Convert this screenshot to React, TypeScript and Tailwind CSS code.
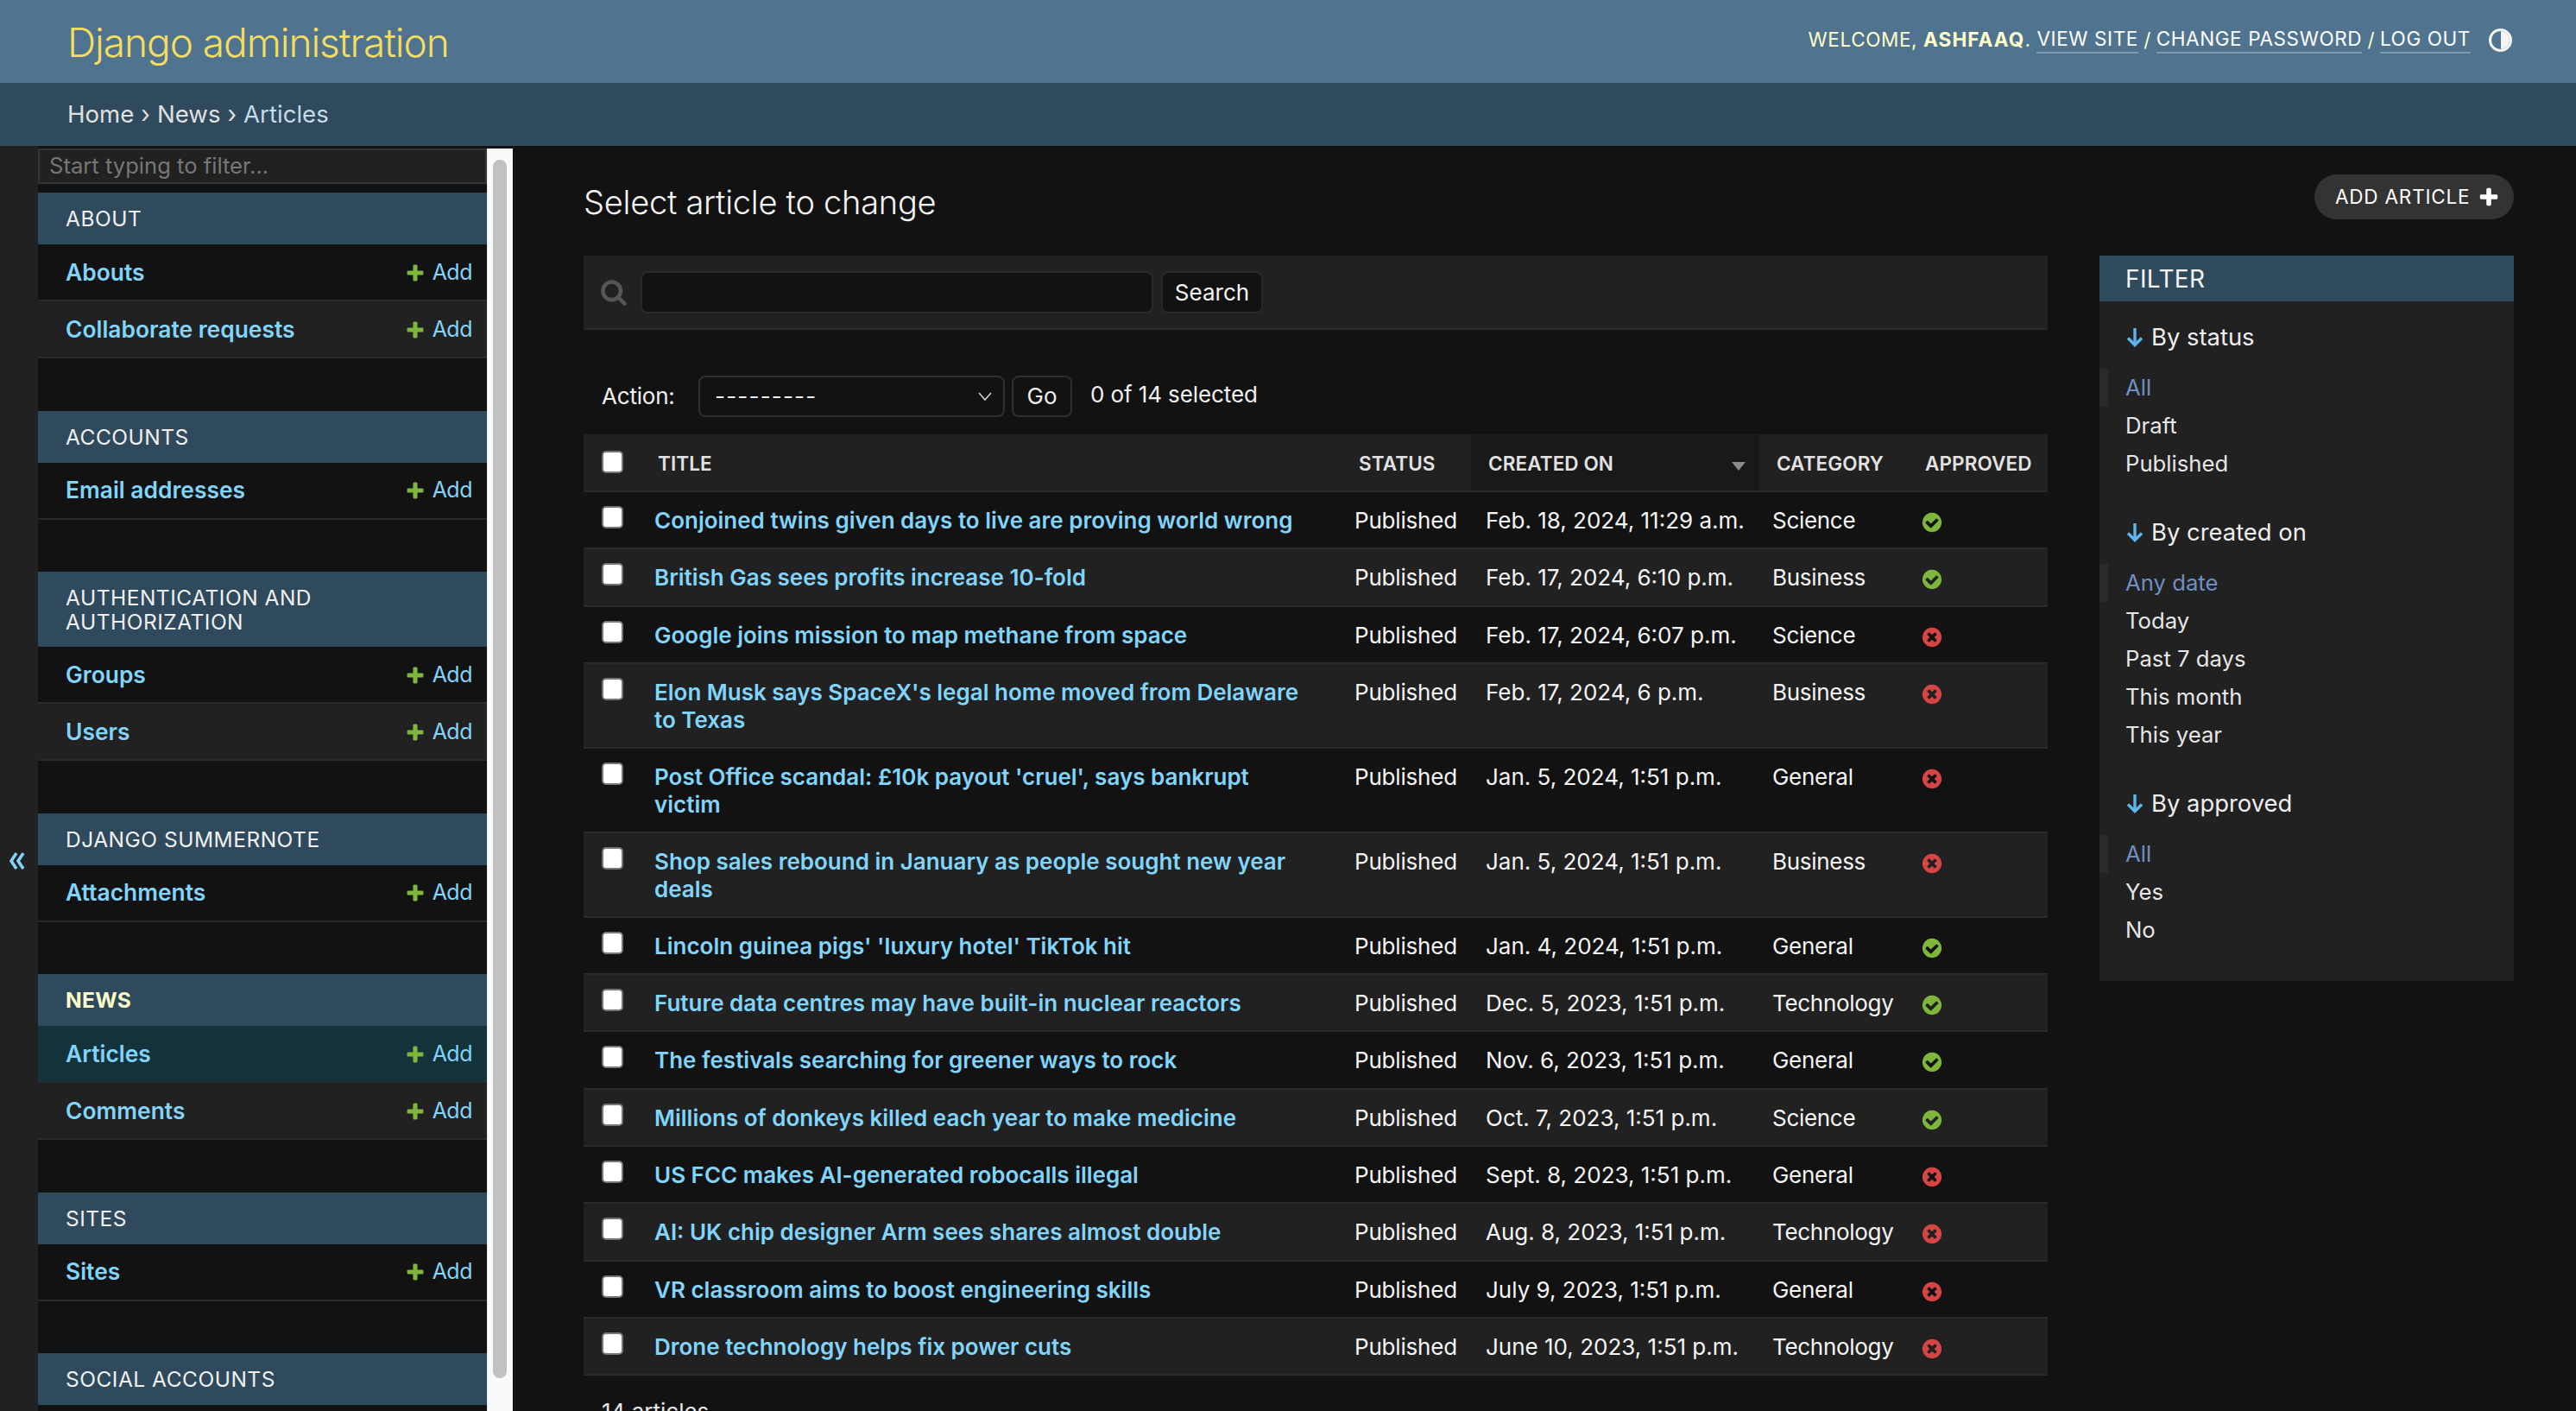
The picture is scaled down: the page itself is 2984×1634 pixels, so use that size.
import React from "react";

const ADD = "M1600 796v192q0 40-28 68t-68 28h-416v416q0 40-28 68t-68 28h-192q-40 0-68-28t-28-68v-416h-416q-40 0-68-28t-28-68v-192q0-40 28-68t68-28h416v-416q0-40 28-68t68-28h192q40 0 68 28t28 68v416h416q40 0 68 28t28 68z";
const YES = "M1412 734q0-28-18-46l-91-90q-19-19-45-19t-45 19l-408 407-226-226q-19-19-45-19t-45 19l-91 90q-18 18-18 46 0 27 18 45l362 362q19 19 45 19 27 0 46-19l543-543q18-18 18-45zm252 162q0 209-103 385.500t-279.500 279.500-385.500 103-385.500-103-279.500-279.500-103-385.500 103-385.500 279.500-279.500 385.500-103 385.500 103 279.500 279.500 103 385.500z";
const NO = "M1277 1122q0-26-19-45l-181-181 181-181q19-19 19-45 0-27-19-46l-90-90q-19-19-46-19-26 0-45 19l-181 181-181-181q-19-19-45-19-27 0-46 19l-90 90q-19 19-19 46 0 26 19 45l181 181-181 181q-19 19-19 45 0 27 19 46l90 90q19 19 46 19 26 0 45-19l181-181 181 181q19 19 45 19 27 0 46-19l90-90q19-19 19-46zm387-226q0 209-103 385.500t-279.500 279.500-385.500 103-385.500-103-279.500-279.500-103-385.500 103-385.500 279.500-279.500 385.500-103 385.500 103 279.500 279.500 103 385.500z";
const SEARCH = "M1216 832q0-185-131.500-316.500t-316.500-131.500-316.500 131.500-131.500 316.500 131.500 316.500 316.500 131.500 316.500-131.500 131.500-316.500zm512 832q0 52-38 90t-90 38q-54 0-90-38l-343-342q-179 124-399 124-143 0-273.500-55.500t-225-150-150-225-55.500-273.500 55.500-273.500 150-225 225-150 273.500-55.500 273.500 55.500 225 150 150 225 55.500 273.500q0 220-124 399l343 343q37 37 37 90z";

function Icon({ d, fill, size }: { d: string; fill: string; size: number }) {
  return (
    <svg width={size} height={size} viewBox="0 0 1792 1792" className="block shrink-0">
      <path fill={fill} d={d} />
    </svg>
  );
}

function Check({ className = "" }: { className?: string }) {
  return (
    <input
      type="checkbox"
      className={"block appearance-none w-[25px] h-[26px] bg-white border-2 border-[#767676] rounded-[5px] " + className}
    />
  );
}

const apps: { name: string[]; bold?: boolean; models: { n: string; current?: boolean }[] }[] = [
  { name: ["About"], models: [{ n: "Abouts" }, { n: "Collaborate requests" }] },
  { name: ["Accounts"], models: [{ n: "Email addresses" }] },
  { name: ["Authentication and", "Authorization"], models: [{ n: "Groups" }, { n: "Users" }] },
  { name: ["Django Summernote"], models: [{ n: "Attachments" }] },
  { name: ["News"], bold: true, models: [{ n: "Articles", current: true }, { n: "Comments" }] },
  { name: ["Sites"], models: [{ n: "Sites" }] },
];

function Sidebar() {
  return (
    <div className="flex h-full shrink-0">
      <div className="w-[44px] bg-[#212121] flex justify-center pt-[818px] pr-[4px]">
        <svg width="20" height="20" viewBox="0 0 20 20" className="block">
          <path d="M9 1 3 10l6 9M17 1l-6 9 6 9" fill="none" stroke="#81d4fa" strokeWidth="3.6" />
        </svg>
      </div>
      <div className="w-[520px] pt-[3px] overflow-hidden">
        <div className="h-[41px] bg-[#212121] border-2 border-[#353535] pl-[11px] flex items-center text-[25.6px] text-[#777]">
          Start typing to filter...
        </div>
        <div className="h-[10px]" />
        {apps.map((a, i) => (
          <div key={i} className="mb-[60.5px]">
            <div
              className={
                "bg-[#2f4a5c] px-[32px] flex flex-col justify-center text-[24.5px] leading-[28px] uppercase " +
                (a.name.length > 1 ? "h-[87px] " : "h-[60px] ") +
                (a.bold ? "font-bold text-[#ffffcc] tracking-[0.3px]" : "font-normal text-[#f0f0f0] tracking-[0.5px]")
              }
            >
              {a.name.map((l) => (
                <div key={l}>{l}</div>
              ))}
            </div>
            {a.models.map((m, j) => (
              <div
                key={m.n}
                className={
                  "h-[66px] px-[32px] pr-[17px] pt-[1px] flex items-center justify-between border-b-2 border-[#2a2a2a] " +
                  (m.current ? "bg-[#14323a]" : j % 2 === 0 ? "bg-[#121212]" : "bg-[#212121]")
                }
              >
                <span className="font-semibold text-[26.4px] text-[#81d4fa]">{m.n}</span>
                <span className="flex items-center gap-[8px] text-[25px] tracking-[-0.5px] text-[#81d4fa]">
                  <Icon d={ADD} fill="#7db63a" size={24} />
                  Add
                </span>
              </div>
            ))}
          </div>
        ))}
        <div className="bg-[#2f4a5c] h-[60px] px-[32px] flex items-center text-[24.5px] tracking-[0.5px] uppercase text-[#f0f0f0]">
          Social accounts
        </div>
      </div>
      <div className="w-[30px] bg-[#fafafa] border-x border-[#ececec] mt-[3px] pt-[13px] pb-[38px] flex justify-center">
        <div className="w-[16px] h-full rounded-full bg-[#c1c1c1]" />
      </div>
    </div>
  );
}

const rows: { t: string; d: string; c: string; ok: boolean }[] = [
  { t: "Conjoined twins given days to live are proving world wrong", d: "Feb. 18, 2024, 11:29 a.m.", c: "Science", ok: true },
  { t: "British Gas sees profits increase 10-fold", d: "Feb. 17, 2024, 6:10 p.m.", c: "Business", ok: true },
  { t: "Google joins mission to map methane from space", d: "Feb. 17, 2024, 6:07 p.m.", c: "Science", ok: false },
  { t: "Elon Musk says SpaceX's legal home moved from Delaware to Texas", d: "Feb. 17, 2024, 6 p.m.", c: "Business", ok: false },
  { t: "Post Office scandal: £10k payout 'cruel', says bankrupt victim", d: "Jan. 5, 2024, 1:51 p.m.", c: "General", ok: false },
  { t: "Shop sales rebound in January as people sought new year deals", d: "Jan. 5, 2024, 1:51 p.m.", c: "Business", ok: false },
  { t: "Lincoln guinea pigs' 'luxury hotel' TikTok hit", d: "Jan. 4, 2024, 1:51 p.m.", c: "General", ok: true },
  { t: "Future data centres may have built-in nuclear reactors", d: "Dec. 5, 2023, 1:51 p.m.", c: "Technology", ok: true },
  { t: "The festivals searching for greener ways to rock", d: "Nov. 6, 2023, 1:51 p.m.", c: "General", ok: true },
  { t: "Millions of donkeys killed each year to make medicine", d: "Oct. 7, 2023, 1:51 p.m.", c: "Science", ok: true },
  { t: "US FCC makes AI-generated robocalls illegal", d: "Sept. 8, 2023, 1:51 p.m.", c: "General", ok: false },
  { t: "AI: UK chip designer Arm sees shares almost double", d: "Aug. 8, 2023, 1:51 p.m.", c: "Technology", ok: false },
  { t: "VR classroom aims to boost engineering skills", d: "July 9, 2023, 1:51 p.m.", c: "General", ok: false },
  { t: "Drone technology helps fix power cuts", d: "June 10, 2023, 1:51 p.m.", c: "Technology", ok: false },
];

function ResultTable() {
  const th = "text-left align-top pt-[22px] text-[22.5px] leading-[24px] font-semibold uppercase text-[#e2e2e2] tracking-[0.1px]";
  const td = "align-top pt-[17px] text-[26px] leading-[32px]";
  return (
    <table className="w-[1696px] table-fixed border-collapse">
      <colgroup>
        <col className="w-[76px]" />
        <col className="w-[810px]" />
        <col className="w-[142px]" />
        <col className="w-[334px]" />
        <col className="w-[172px]" />
        <col className="w-[162px]" />
      </colgroup>
      <thead>
        <tr className="h-[66px] bg-[#212121] border-b-2 border-[#2a2a2a]">
          <th className="align-top pt-[19px] pl-[21px]">
            <Check />
          </th>
          <th className={th + " pl-[10px]"}>Title</th>
          <th className={th + " pl-[12px]"}>Status</th>
          <th className={th + " pl-[20px] bg-[#191919] relative"}>
            Created on
            <span className="absolute right-[16px] top-[32px] w-0 h-0 border-x-[8px] border-x-transparent border-t-[10px] border-t-[#8a8a8a]" />
          </th>
          <th className={th + " pl-[20px]"}>Category</th>
          <th className={th + " pl-[20px]"}>Approved</th>
        </tr>
      </thead>
      <tbody>
        {rows.map((r, i) => (
          <tr
            key={r.t}
            className={(i % 2 === 0 ? "bg-[#121212] " : "bg-[#212121] ") + "border-b-2 border-[#2a2a2a] " + (i >= 3 && i <= 5 ? "h-[98px]" : "h-[66.3px]")}
          >
            <td className="align-top pt-[16px] pl-[21px]">
              <Check />
            </td>
            <td className={td + " pl-[6px] pr-[40px] font-semibold text-[#81d4fa]"}>{r.t}</td>
            <td className={td + " pl-[7px] tracking-[-0.2px] text-[#f5f5f5]"}>Published</td>
            <td className={td + " pl-[17px] text-[#f5f5f5]"}>{r.d}</td>
            <td className={td + " pl-[15px] tracking-[-0.3px] text-[#f5f5f5]"}>{r.c}</td>
            <td className="align-top pt-[22px] pl-[15px]">
              <Icon d={r.ok ? YES : NO} fill={r.ok ? "#7db63a" : "#d64545"} size={26} />
            </td>
          </tr>
        ))}
      </tbody>
    </table>
  );
}

function FilterGroup({ title, items }: { title: string; items: string[] }) {
  return (
    <div className="mb-[36px]">
      <div className="flex items-center gap-[8px] pl-[30px] h-[44px] text-[27.4px] text-[#eeeeee]">
        <svg width="22" height="24" viewBox="0 0 22 24" className="block mt-[-2px]">
          <path d="M11 2v19M3 13.500l8 8 8-8" fill="none" stroke="#5db4ef" strokeWidth="3.4" />
        </svg>
        {title}
      </div>
      <div className="mt-[14px]">
        {items.map((it, i) => (
          <div
            key={it}
            className={
              "h-[44px] flex items-center text-[25.7px] pl-[20px] border-l-[10px] " +
              (i === 0 ? "border-[#2a2a2a] text-[#6f8fc4]" : "border-transparent text-[#e6e6e6]")
            }
          >
            {it}
          </div>
        ))}
      </div>
    </div>
  );
}

function FilterPanel() {
  return (
    <div className="w-[480px] h-[840px] bg-[#212121] shrink-0">
      <div className="h-[53px] bg-[#2f4a5c] pl-[30px] flex items-center text-[28px] text-[#f5f5f5] tracking-[0.4px]">FILTER</div>
      <div className="pt-[20px]">
        <FilterGroup title="By status" items={["All", "Draft", "Published"]} />
        <FilterGroup title="By created on" items={["Any date", "Today", "Past 7 days", "This month", "This year"]} />
        <FilterGroup title="By approved" items={["All", "Yes", "No"]} />
      </div>
    </div>
  );
}

function Main() {
  return (
    <div className="flex-1 min-w-0 pl-[82px] pr-[72px] overflow-hidden">
      <div className="h-[127px] flex items-start justify-between">
        <h1 className="mt-[33px] text-[38px] leading-[64px] font-light text-[#f5f5f5] tracking-[-0.25px]">Select article to change</h1>
        <div className="mt-[33px] h-[52px] w-[231px] rounded-full bg-[#333333] flex items-center justify-between pl-[24px] pr-[16px] text-[22.5px] text-white uppercase tracking-[0.8px]">
          Add article
          <Icon d={ADD} fill="#ffffff" size={26} />
        </div>
      </div>
      <div className="flex gap-[60px] items-start">
        <div className="w-[1696px] shrink-0">
          <div className="h-[86px] bg-[#212121] border-b-2 border-[#2a2a2a] flex items-center pl-[19px]">
            <Icon d={SEARCH} fill="#555555" size={32} />
            <div className="ml-[15px] w-[594px] h-[49px] bg-[#121212] border-2 border-[#2a2a2a] rounded-[8px]" />
            <div className="ml-[9px] w-[118px] h-[49px] bg-[#121212] border-2 border-[#2a2a2a] rounded-[8px] flex items-center justify-center text-[26px] text-[#f5f5f5]">
              Search
            </div>
          </div>
          <div className="h-[121px] flex items-center pl-[21px] pt-[32px] text-[26px] text-[#f0f0f0]">
            <span className="w-[112px] tracking-[-0.2px]">Action:</span>
            <div className="relative w-[355px] h-[48px] border-2 border-[#2f2f2f] rounded-[8px] bg-[#121212] flex items-center pl-[17px] pr-[12px] justify-between">
              <span className="tracking-[1.2px]">---------</span>
              <svg width="18" height="12" viewBox="0 0 18 12" className="block">
                <path d="M2 2l7 8 7-8" fill="none" stroke="#d0d0d0" strokeWidth="1.6" />
              </svg>
            </div>
            <div className="ml-[8px] w-[70px] h-[48px] border-2 border-[#2f2f2f] rounded-[8px] bg-[#121212] flex items-center justify-center">Go</div>
            <span className="ml-[21px] mt-[-5px] tracking-[-0.1px]">0 of 14 selected</span>
          </div>
          <ResultTable />
          <div className="pl-[21px] pt-[22px] text-[26px] text-[#e6e6e6]">14 articles</div>
        </div>
        <FilterPanel />
      </div>
    </div>
  );
}

export default function App() {
  return (
    <div className="w-[2984px] h-[1634px] overflow-hidden flex flex-col bg-[#121212] font-['Inter','Noto_Sans',sans-serif] text-[#f5f5f5]">
      <header className="h-[96px] shrink-0 bg-[#50748f] flex items-start justify-between pl-[78px] pr-[74px]">
        <div className="mt-[17px] text-[46px] leading-[64px] font-light text-[#f5dd5d] tracking-[-1.05px]">Django administration</div>
        <div className="flex items-center mt-[27px] h-[38px] text-[22.5px] tracking-[0.6px] uppercase text-[#ffffcc] font-normal">
          <span>Welcome,&nbsp;</span>
          <strong className="font-bold tracking-[1.1px]">Ashfaaq</strong>
          <span>.&nbsp;</span>
          <span className="text-white border-b-2 border-[#7f99ad] leading-[30px]">View site</span>
          <span className="tracking-[0px]">&nbsp;/&nbsp;</span>
          <span className="text-white border-b-2 border-[#7f99ad] leading-[30px]">Change password</span>
          <span className="tracking-[0px]">&nbsp;/&nbsp;</span>
          <span className="text-white border-b-2 border-[#7f99ad] leading-[30px]">Log out</span>
          <span className="ml-[21px] w-[27px] h-[27px] rounded-full border-[3px] border-[#f5f5f5] overflow-hidden flex justify-end">
            <span className="block w-1/2 h-full bg-[#f5f5f5]" />
          </span>
        </div>
      </header>
      <div className="h-[73px] shrink-0 bg-[#2f4a5c] pl-[78px] flex items-center text-[27.6px] text-[#e0e0e0]">
        <span>Home</span>
        <span className="mx-[8px]">›</span>
        <span>News</span>
        <span className="mx-[8px]">›</span>
        <span className="text-[#c4dce8]">Articles</span>
      </div>
      <div className="flex-1 min-h-0 flex">
        <Sidebar />
        <Main />
      </div>
    </div>
  );
}
